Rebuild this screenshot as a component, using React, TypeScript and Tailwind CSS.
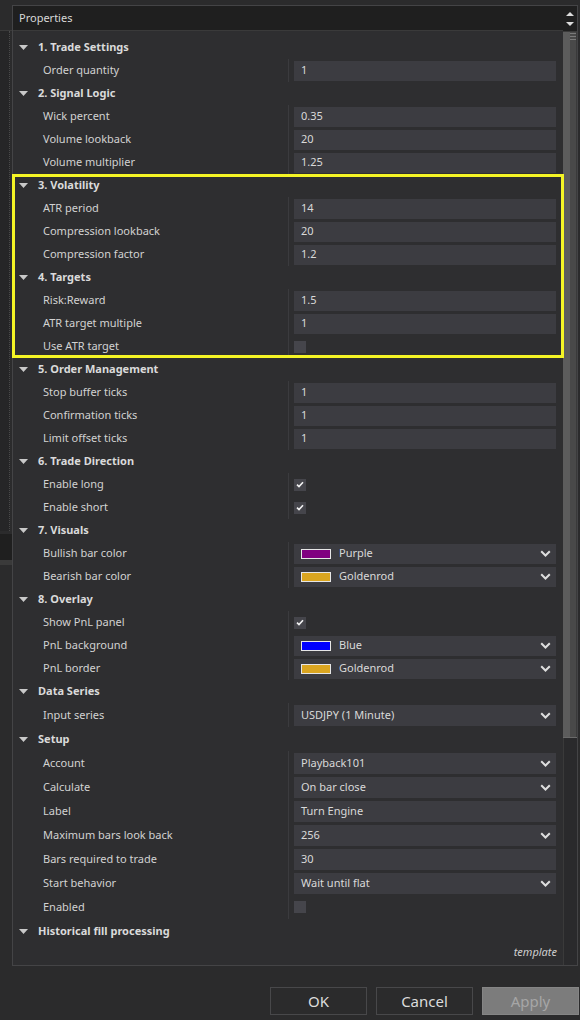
import React from "react";

type Row =
  | { kind: "section"; title: string }
  | { kind: "text"; label: string; value: string }
  | { kind: "check"; label: string; checked: boolean }
  | { kind: "select"; label: string; value: string; swatch?: string };

const rows: Row[] = [
  { kind: "section", title: "1. Trade Settings" },
  { kind: "text", label: "Order quantity", value: "1" },
  { kind: "section", title: "2. Signal Logic" },
  { kind: "text", label: "Wick percent", value: "0.35" },
  { kind: "text", label: "Volume lookback", value: "20" },
  { kind: "text", label: "Volume multiplier", value: "1.25" },
  { kind: "section", title: "3. Volatility" },
  { kind: "text", label: "ATR period", value: "14" },
  { kind: "text", label: "Compression lookback", value: "20" },
  { kind: "text", label: "Compression factor", value: "1.2" },
  { kind: "section", title: "4. Targets" },
  { kind: "text", label: "Risk:Reward", value: "1.5" },
  { kind: "text", label: "ATR target multiple", value: "1" },
  { kind: "check", label: "Use ATR target", checked: false },
  { kind: "section", title: "5. Order Management" },
  { kind: "text", label: "Stop buffer ticks", value: "1" },
  { kind: "text", label: "Confirmation ticks", value: "1" },
  { kind: "text", label: "Limit offset ticks", value: "1" },
  { kind: "section", title: "6. Trade Direction" },
  { kind: "check", label: "Enable long", checked: true },
  { kind: "check", label: "Enable short", checked: true },
  { kind: "section", title: "7. Visuals" },
  { kind: "select", label: "Bullish bar color", value: "Purple", swatch: "#800080" },
  { kind: "select", label: "Bearish bar color", value: "Goldenrod", swatch: "#daa520" },
  { kind: "section", title: "8. Overlay" },
  { kind: "check", label: "Show PnL panel", checked: true },
  { kind: "select", label: "PnL background", value: "Blue", swatch: "#0000ff" },
  { kind: "select", label: "PnL border", value: "Goldenrod", swatch: "#daa520" },
  { kind: "section", title: "Data Series" },
];

// rows below this point are a pixel taller in the original grid
const tallRows: Row[] = [
  { kind: "select", label: "Input series", value: "USDJPY (1 Minute)" },
  { kind: "section", title: "Setup" },
  { kind: "select", label: "Account", value: "Playback101" },
  { kind: "select", label: "Calculate", value: "On bar close" },
  { kind: "text", label: "Label", value: "Turn Engine" },
  { kind: "select", label: "Maximum bars look back", value: "256" },
  { kind: "text", label: "Bars required to trade", value: "30" },
  { kind: "select", label: "Start behavior", value: "Wait until flat" },
  { kind: "check", label: "Enabled", checked: false },
  { kind: "section", title: "Historical fill processing" },
];

function Triangle() {
  return (
    <svg width="9" height="5" viewBox="0 0 9 5" className="shrink-0">
      <polygon points="0,0 9,0 4.5,5" fill="#c9c9c9" />
    </svg>
  );
}

function Chevron() {
  return (
    <svg width="11" height="7" viewBox="0 0 11 7" className="shrink-0">
      <path d="M1.2 1.2 L5.5 5.5 L9.8 1.2" fill="none" stroke="#dedede" strokeWidth="2" />
    </svg>
  );
}

function Value({ row, tall }: { row: Row; tall: boolean }) {
  const box = tall ? "h-[21px]" : "h-[20px]";
  if (row.kind === "text") {
    return <div className={`${box} bg-[#3c3c41] flex items-center pl-[7px] text-[#d9d9d9]`}>{row.value}</div>;
  }
  if (row.kind === "select") {
    return (
      <div className={`${box} bg-[#3c3c41] flex items-center pl-[7px] pr-[5px] text-[#d9d9d9]`}>
        {row.swatch && (
          <span className="w-[30px] h-[10px] border border-[#e6e6e6] mr-[8px] shrink-0" style={{ backgroundColor: row.swatch }} />
        )}
        <span className="flex-1">{row.value}</span>
        <Chevron />
      </div>
    );
  }
  if (row.kind === "check") {
    return (
      <div className={`${box} flex items-center`}>
        <div className="w-[12px] h-[12px] bg-[#45454b] flex items-center justify-center">
          {row.checked && (
            <svg width="8" height="7" viewBox="0 0 8 7">
              <path d="M1 3.6 L3 5.6 L7 1.2" fill="none" stroke="#f2f2f2" strokeWidth="1.6" />
            </svg>
          )}
        </div>
      </div>
    );
  }
  return null;
}

function GridRow({ row, tall }: { row: Row; tall: boolean }) {
  const h = tall ? "h-[24px]" : "h-[23px]";
  if (row.kind === "section") {
    return (
      <div className={`${h} flex items-center pl-[6px] gap-[10px] font-bold text-[#dadada]`}>
        <Triangle />
        <span>{row.title}</span>
      </div>
    );
  }
  return (
    <div className={`${h} flex`}>
      <div className="w-[275px] flex items-center pl-[30px] text-[#d2d2d2]">{row.label}</div>
      <div className="flex-1 border-l border-[#3b3b3e] pl-[5px] pr-[7px] flex items-center">
        <div className="flex-1">
          <Value row={row} tall={tall} />
        </div>
      </div>
    </div>
  );
}

export default function App() {
  return (
    <div className="w-[580px] h-[1020px] bg-[#2b2b2c] flex overflow-hidden text-[11px] font-['Segoe_UI','Noto_Sans',sans-serif]">
      {/* what shows of the window behind */}
      <div className="w-[12px] flex flex-col">
        <div className="h-[31px] bg-[#2b2b2c] border-b border-[#3a3a3a]" />
        <div className="h-[500px] bg-[#262627] border-r border-dotted border-[#4a4a4a] mr-[2px]" />
        <div className="h-[26px] mt-[3px] bg-[#1f1f1f]" />
        <div className="h-[5px] bg-[#3a3a3a]" />
        <div className="flex-1" />
      </div>

      <div className="flex-1 flex flex-col">
        <div className="relative mt-[5px] h-[961px] w-[566px] border border-[#444446] flex">
          <div className="flex-1 flex flex-col bg-[#2e2e30]">
            <div className="h-[25px] bg-[#1f1f1f] border-b border-[#3a3a3a] flex items-center pl-[6px] text-[#d8d8d8]">
              Properties
            </div>
            <div className="pt-[5px]">
              {rows.map((r, i) => (
                <GridRow key={i} row={r} tall={false} />
              ))}
              {tallRows.map((r, i) => (
                <GridRow key={"t" + i} row={r} tall />
              ))}
            </div>
            <div className="flex justify-end pr-[6px] mt-[1px] italic text-[11px] text-[#cfcfcf]">template</div>
          </div>

          {/* scrollbar */}
          <div className="w-[14px] flex flex-col bg-[#2a2a2c]">
            <div className="h-[26px] bg-[#1f1f1f] border-b border-[#3a3a3a] flex flex-col items-center justify-center gap-[6px]">
              <svg width="8" height="4" viewBox="0 0 8 4">
                <polygon points="0,4 8,4 4,0" fill="#dcdcdc" />
              </svg>
              <svg width="8" height="4" viewBox="0 0 8 4">
                <polygon points="0,0 8,0 4,4" fill="#dcdcdc" />
              </svg>
            </div>
            <div className="h-[706px] flex border-b border-[#6a6a6a]">
              <div className="w-[7px] bg-[#5c5c5c]" />
              <div className="flex-1 bg-[#494949] border-r border-[#3a3a3a] flex flex-col gap-[1px] pt-[1px]">
                <div className="h-[1px] bg-[#7a7a7a]" />
                <div className="h-[1px] mt-[1px] bg-[#7a7a7a]" />
                <div className="h-[1px] mt-[1px] bg-[#7a7a7a]" />
              </div>
            </div>
            <div className="flex-1 border-l border-[#3a3a3a]" />
          </div>

          {/* yellow annotation box */}
          <div className="absolute left-[-1px] top-[168px] w-[552px] h-[184px] border-[3px] border-[#f4f425] pointer-events-none" />
        </div>

        <div className="mt-[21px] flex gap-[9px] pl-[258px] text-[15px]">
          <button className="w-[97px] h-[28px] bg-[#2b2b2c] border border-[#48484a] text-[#dcdcdc]">OK</button>
          <button className="w-[97px] h-[28px] bg-[#2b2b2c] border border-[#48484a] text-[#dcdcdc]">Cancel</button>
          <button className="w-[97px] h-[28px] bg-[#7c7c7c] border border-[#858585] text-[#a6a6a6]">Apply</button>
        </div>
      </div>
    </div>
  );
}
